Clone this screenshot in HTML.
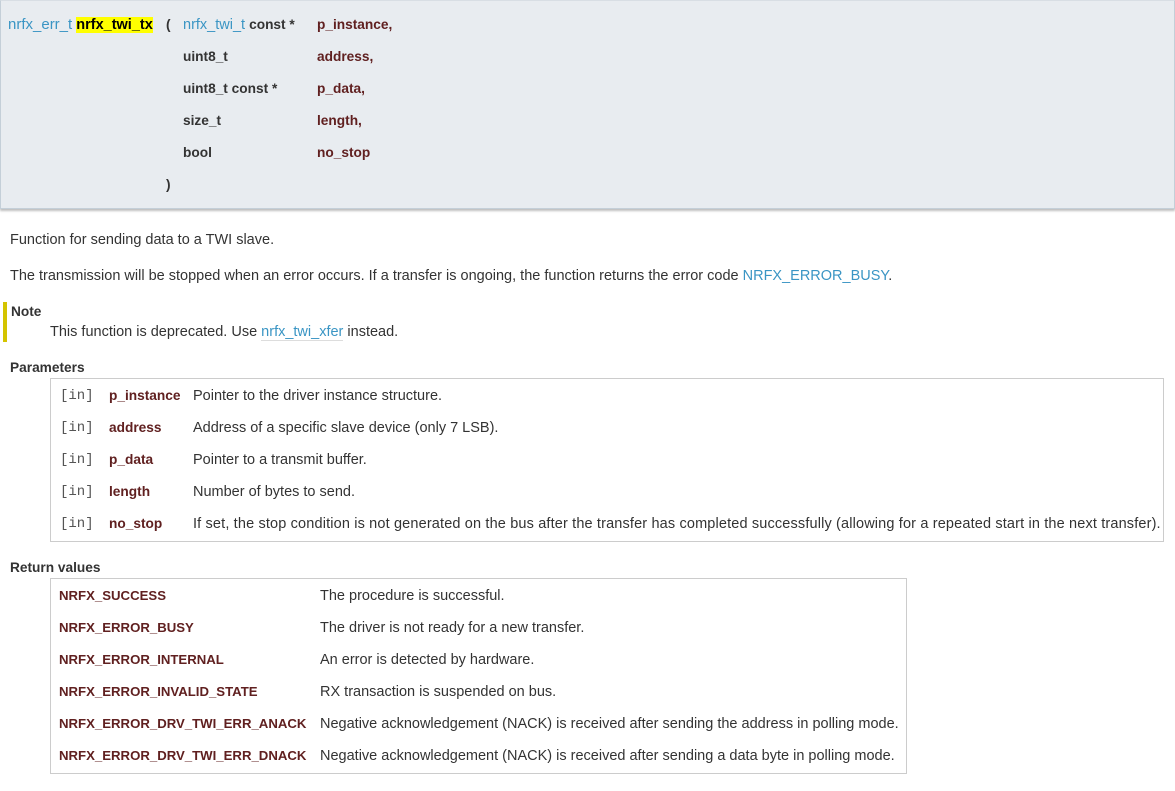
<!DOCTYPE html>
<html><head><meta charset="utf-8"><style>
body{margin:0;width:1175px;height:791px;background:#fff;font-family:"Liberation Sans",sans-serif;font-size:14.5px;color:#333;position:relative;overflow:hidden}
.a{position:absolute;white-space:nowrap;line-height:16px}
.hdr{position:absolute;left:0;top:0;width:1173px;height:207px;background:#e8ecf0;border:1px solid #c4cfd8;border-top-color:#d8dee4;box-shadow:0 2px 2px rgba(0,0,0,.25)}
.l{color:#3a95c4}
.b{font-weight:bold;color:#333;font-size:13.7px}
.n{font-weight:bold;color:#602020;font-size:13.7px}
.r{font-weight:bold;color:#602020;font-size:13.2px}
.hl{background:#ffff00;color:#000;font-weight:bold;font-size:14.5px}
.m{font-family:"Liberation Mono",monospace;color:#555;font-size:14px}
.box{position:absolute;border:1px solid #ccc}
</style></head><body>
<div class="hdr"></div>
<div class="a" style="left:8px;top:17px"><span class="l" style="font-size:15px">nrfx_err_t</span> <span class="hl">nrfx_twi_tx</span></div>
<div class="a b" style="left:166px;top:17px">(</div>
<div class="a" style="left:183px;top:17px"><span class="l">nrfx_twi_t</span> <span class="b">const *</span></div>
<div class="a n" style="left:317px;top:17px">p_instance,</div>
<div class="a b" style="left:183px;top:49px">uint8_t</div><div class="a n" style="left:317px;top:49px">address,</div>
<div class="a b" style="left:183px;top:81px">uint8_t const *</div><div class="a n" style="left:317px;top:81px">p_data,</div>
<div class="a b" style="left:183px;top:113px">size_t</div><div class="a n" style="left:317px;top:113px">length,</div>
<div class="a b" style="left:183px;top:145px">bool</div><div class="a n" style="left:317px;top:145px">no_stop</div>
<div class="a b" style="left:166px;top:177px">)</div>

<div class="a" style="left:10px;top:232px">Function for sending data to a TWI slave.</div>
<div class="a" style="left:10px;top:268px">The transmission will be stopped when an error occurs. If a transfer is ongoing, the function returns the error code <span class="l">NRFX_ERROR_BUSY</span>.</div>
<div style="position:absolute;left:3px;top:302px;width:4px;height:40px;background:#d4c400"></div>
<div class="a b" style="left:11px;top:304px">Note</div>
<div class="a" style="left:50px;top:324px">This function is deprecated. Use <span class="l" style="border-bottom:1px solid #ddd">nrfx_twi_xfer</span> instead.</div>

<div class="a b" style="left:10px;top:360px">Parameters</div>
<div class="box" style="left:50px;top:378px;width:1112px;height:162px"></div>
<div class="a m" style="left:60px;top:388px">[in]</div><div class="a n" style="left:109px;top:388px">p_instance</div><div class="a" style="left:193px;top:388px">Pointer to the driver instance structure.</div>
<div class="a m" style="left:60px;top:420px">[in]</div><div class="a n" style="left:109px;top:420px">address</div><div class="a" style="left:193px;top:420px">Address of a specific slave device (only 7 LSB).</div>
<div class="a m" style="left:60px;top:452px">[in]</div><div class="a n" style="left:109px;top:452px">p_data</div><div class="a" style="left:193px;top:452px">Pointer to a transmit buffer.</div>
<div class="a m" style="left:60px;top:484px">[in]</div><div class="a n" style="left:109px;top:484px">length</div><div class="a" style="left:193px;top:484px">Number of bytes to send.</div>
<div class="a m" style="left:60px;top:516px">[in]</div><div class="a n" style="left:109px;top:516px">no_stop</div><div class="a" style="left:193px;top:516px;letter-spacing:.15px">If set, the stop condition is not generated on the bus after the transfer has completed successfully (allowing for a repeated start in the next transfer).</div>

<div class="a b" style="left:10px;top:560px">Return values</div>
<div class="box" style="left:50px;top:578px;width:855px;height:194px"></div>
<div class="a r" style="left:59px;top:588px">NRFX_SUCCESS</div><div class="a" style="left:320px;top:588px">The procedure is successful.</div>
<div class="a r" style="left:59px;top:620px">NRFX_ERROR_BUSY</div><div class="a" style="left:320px;top:620px">The driver is not ready for a new transfer.</div>
<div class="a r" style="left:59px;top:652px">NRFX_ERROR_INTERNAL</div><div class="a" style="left:320px;top:652px">An error is detected by hardware.</div>
<div class="a r" style="left:59px;top:684px">NRFX_ERROR_INVALID_STATE</div><div class="a" style="left:320px;top:684px">RX transaction is suspended on bus.</div>
<div class="a r" style="left:59px;top:716px">NRFX_ERROR_DRV_TWI_ERR_ANACK</div><div class="a" style="left:320px;top:716px">Negative acknowledgement (NACK) is received after sending the address in polling mode.</div>
<div class="a r" style="left:59px;top:748px">NRFX_ERROR_DRV_TWI_ERR_DNACK</div><div class="a" style="left:320px;top:748px">Negative acknowledgement (NACK) is received after sending a data byte in polling mode.</div>
</body></html>
